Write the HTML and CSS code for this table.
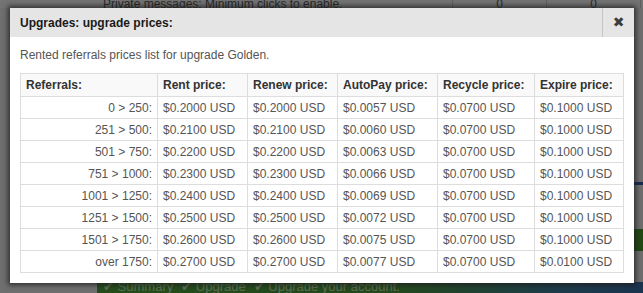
FILE: index.html
```html
<!DOCTYPE html>
<html>
<head>
<meta charset="utf-8">
<link rel="stylesheet" href="styles.css">
</head>
<body>
<div class="page">
  <div class="pm-row">
    <span class="pm-label">Private messages: Minimum clicks to enable.</span>
    <span class="pm-cell">0</span>
    <span class="pm-cell">0</span>
  </div>
  <div class="page-mid">
    <div class="stripe-blue"></div>
    <div class="stripe-green"></div>
  </div>
  <div class="crumbs">
    <span class="crumb">&#10004; Summary</span>
    <span class="crumb">&#10004; Upgrade</span>
    <span class="crumb">&#10004; Upgrade your account.</span>
  </div>
</div>
<div class="overlay"></div>
<div class="dialog">
  <div class="dialog-head">
    <span class="dialog-title">Upgrades: upgrade prices:</span>
    <button class="dialog-close" type="button">&#10006;</button>
  </div>
  <div class="dialog-body">
    <p class="intro">Rented referrals prices list for upgrade Golden.</p>
    <table class="prices">
      <colgroup>
        <col class="c1"><col class="c2"><col class="c3"><col class="c4"><col class="c5"><col class="c6">
      </colgroup>
      <thead>
        <tr><th>Referrals:</th><th>Rent price:</th><th>Renew price:</th><th>AutoPay price:</th><th>Recycle price:</th><th>Expire price:</th></tr>
      </thead>
      <tbody>
        <tr><td class="ref">0 &gt; 250:</td><td>$0.2000 USD</td><td>$0.2000 USD</td><td>$0.0057 USD</td><td>$0.0700 USD</td><td>$0.1000 USD</td></tr>
        <tr><td class="ref">251 &gt; 500:</td><td>$0.2100 USD</td><td>$0.2100 USD</td><td>$0.0060 USD</td><td>$0.0700 USD</td><td>$0.1000 USD</td></tr>
        <tr><td class="ref">501 &gt; 750:</td><td>$0.2200 USD</td><td>$0.2200 USD</td><td>$0.0063 USD</td><td>$0.0700 USD</td><td>$0.1000 USD</td></tr>
        <tr><td class="ref">751 &gt; 1000:</td><td>$0.2300 USD</td><td>$0.2300 USD</td><td>$0.0066 USD</td><td>$0.0700 USD</td><td>$0.1000 USD</td></tr>
        <tr><td class="ref">1001 &gt; 1250:</td><td>$0.2400 USD</td><td>$0.2400 USD</td><td>$0.0069 USD</td><td>$0.0700 USD</td><td>$0.1000 USD</td></tr>
        <tr><td class="ref">1251 &gt; 1500:</td><td>$0.2500 USD</td><td>$0.2500 USD</td><td>$0.0072 USD</td><td>$0.0700 USD</td><td>$0.1000 USD</td></tr>
        <tr><td class="ref">1501 &gt; 1750:</td><td>$0.2600 USD</td><td>$0.2600 USD</td><td>$0.0075 USD</td><td>$0.0700 USD</td><td>$0.1000 USD</td></tr>
        <tr><td class="ref">over 1750:</td><td>$0.2700 USD</td><td>$0.2700 USD</td><td>$0.0077 USD</td><td>$0.0700 USD</td><td>$0.0100 USD</td></tr>
      </tbody>
    </table>
  </div>
</div>
</body>
</html>
```
FILE: styles.css
```css
html, body {
  margin: 0;
  padding: 0;
  width: 643px;
  height: 293px;
  overflow: hidden;
}
body {
  position: relative;
  background: #ececec;
  font-family: "Liberation Sans", Arial, sans-serif;
}
.page {
  height: 293px;
  display: flex;
  flex-direction: column;
}
.pm-row {
  display: flex;
  height: 8px;
  font-size: 12px;
  line-height: 8px;
  color: #555;
  background: #f4f4f4;
  overflow: hidden;
}
.pm-label {
  width: 453px;
  padding-left: 103px;
  box-sizing: border-box;
  white-space: nowrap;
  overflow: hidden;
  border-right: 1px solid #ccc;
}
.pm-cell {
  width: 93px;
  text-align: center;
  border-right: 1px solid #ccc;
}
.page-mid {
  flex: 1;
  display: flex;
  flex-direction: column;
  align-items: flex-end;
  padding-top: 174px;
}
.stripe-blue {
  width: 20px;
  height: 3px;
  background: #2e5ea8;
}
.stripe-green {
  width: 20px;
  height: 22px;
  margin-top: 44px;
  background: #4a9a2a;
}
.crumbs {
  height: 11px;
  margin-left: 97px;
  display: flex;
  gap: 8px;
  padding-left: 6px;
  font-size: 13px;
  line-height: 9px;
  color: #c7e6b9;
  background: linear-gradient(90deg, #4fa33a 0%, #4b9a3e 55%, #3f7ea0 85%, #3a6fa8 100%);
  overflow: hidden;
  white-space: nowrap;
}
.overlay {
  position: absolute;
  inset: 0;
  background: rgba(0, 0, 0, 0.53);
}
.dialog {
  position: absolute;
  left: 10px;
  top: 8px;
  width: 624px;
  background: #fff;
  box-shadow: 0 0 5px 2px rgba(30, 30, 30, 0.8);
}
.dialog-head {
  display: flex;
  align-items: stretch;
  height: 29px;
  background: #e5e5e5;
}
.dialog-title {
  flex: 1;
  padding-left: 10px;
  font-size: 12px;
  font-weight: bold;
  line-height: 30px;
  color: #1a1a1a;
}
.dialog-close {
  width: 32px;
  border: 0;
  border-left: 1px solid #c4c4c4;
  background: transparent;
  padding: 0;
  font-size: 14px;
  line-height: 29px;
  color: #3d3d3d;
  font-family: "DejaVu Sans", sans-serif;
}
.dialog-body {
  padding: 10px 11px 10px 10px;
}
.intro {
  margin: 0 0 10px;
  font-size: 12px;
  line-height: 16px;
  color: #555;
}
.prices {
  border-collapse: collapse;
  table-layout: fixed;
  width: 603px;
  font-size: 12px;
}
.c1 { width: 137px; }
.c2 { width: 90px; }
.c3 { width: 90px; }
.c4 { width: 100px; }
.c5 { width: 97px; }
.c6 { width: 89px; }
.prices th, .prices td {
  border: 1px solid #dddddd;
  padding: 0 5px;
  text-align: left;
  white-space: nowrap;
}
.prices th {
  height: 22px;
  font-weight: bold;
  color: #333;
  background: #f9f9f9;
}
.prices td {
  height: 21px;
  color: #555;
}
.prices td.ref {
  text-align: right;
}
```
